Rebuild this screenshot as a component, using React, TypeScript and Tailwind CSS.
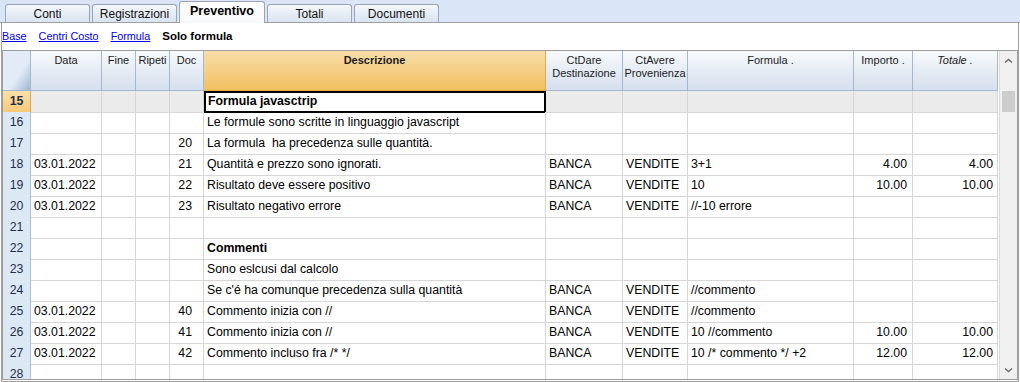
import React from "react";

type Row = {
  n: number;
  data?: string;
  doc?: string;
  desc?: string;
  bold?: boolean;
  dare?: string;
  avere?: string;
  formula?: string;
  importo?: string;
  totale?: string;
};

const rows: Row[] = [
  { n: 15, desc: "Formula javasctrip", bold: true },
  { n: 16, desc: "Le formule sono scritte in linguaggio javascript" },
  { n: 17, doc: "20", desc: "La formula  ha precedenza sulle quantità." },
  { n: 18, data: "03.01.2022", doc: "21", desc: "Quantità e prezzo sono ignorati.", dare: "BANCA", avere: "VENDITE", formula: "3+1", importo: "4.00", totale: "4.00" },
  { n: 19, data: "03.01.2022", doc: "22", desc: "Risultato deve essere positivo", dare: "BANCA", avere: "VENDITE", formula: "10", importo: "10.00", totale: "10.00" },
  { n: 20, data: "03.01.2022", doc: "23", desc: "Risultato negativo errore", dare: "BANCA", avere: "VENDITE", formula: "//-10 errore" },
  { n: 21 },
  { n: 22, desc: "Commenti", bold: true },
  { n: 23, desc: "Sono eslcusi dal calcolo" },
  { n: 24, desc: "Se c'é ha comunque precedenza sulla quantità", dare: "BANCA", avere: "VENDITE", formula: "//commento" },
  { n: 25, data: "03.01.2022", doc: "40", desc: "Commento inizia con //", dare: "BANCA", avere: "VENDITE", formula: "//commento" },
  { n: 26, data: "03.01.2022", doc: "41", desc: "Commento inizia con //", dare: "BANCA", avere: "VENDITE", formula: "10 //commento", importo: "10.00", totale: "10.00" },
  { n: 27, data: "03.01.2022", doc: "42", desc: "Commento incluso fra /* */", dare: "BANCA", avere: "VENDITE", formula: "10 /* commento */ +2", importo: "12.00", totale: "12.00" },
  { n: 28 },
];

const cols =
  "grid grid-cols-[28px_71px_34px_34px_34px_342px_77px_65px_166px_59px_85px]";

const tabs = ["Conti", "Registrazioni", "Preventivo", "Totali", "Documenti"];

const Head = ({
  children,
  italic,
}: {
  children: React.ReactNode;
  italic?: boolean;
}) => (
  <div
    className={`border-r border-b border-[#a3b9d2] bg-linear-to-b from-[#f8fafd] to-[#d5dfed] pt-[3px] text-center text-[11px] leading-[13px] text-[#1b1b1b] ${
      italic ? "italic" : ""
    }`}
  >
    {children}
  </div>
);

const Cell = ({
  children,
  right,
  gray,
  pr,
}: {
  children?: React.ReactNode;
  right?: boolean;
  gray?: boolean;
  pr?: string;
}) => (
  <div
    className={`overflow-hidden whitespace-pre border-r border-b border-[#d6d6d6] pl-[3px] leading-[21px] ${
      right ? "text-right " + (pr ?? "pr-[5px]") : ""
    } ${gray ? "bg-[#ebebeb]" : ""}`}
  >
    {children}
  </div>
);

const Chevron = ({ down }: { down?: boolean }) => (
  <svg width="9" height="6" viewBox="0 0 9 6" className="block">
    <path
      d={down ? "M1 1.5 L4.5 4.5 L8 1.5" : "M1 4.5 L4.5 1.5 L8 4.5"}
      fill="none"
      stroke="#6b6b6b"
      strokeWidth="1.4"
    />
  </svg>
);

export default function App() {
  return (
    <div className="relative h-[382px] w-[1020px] overflow-hidden bg-white font-['Liberation_Sans',Arial,sans-serif] text-black">
      {/* tab bar */}
      <div className="flex h-[23px] items-end gap-[2px] border-b border-[#a0a0a0] bg-[#dae6f7] pl-[5px]">
        {tabs.map((t) =>
          t === "Preventivo" ? (
            <div
              key={t}
              className="relative z-10 -mb-px flex h-[22px] w-[86px] items-center justify-center rounded-t-[3px] border border-b-0 border-[#9ca6b3] bg-linear-to-b from-[#ffffff] to-[#f6f8fb] pb-[2px] text-[12.5px] font-bold"
            >
              {t}
            </div>
          ) : (
            <div
              key={t}
              className="flex h-[18px] w-[85px] items-center justify-center rounded-t-[3px] border border-b-0 border-[#9ca6b3] bg-linear-to-b from-[#f5f8fc] to-[#d9e3f1] text-[12px] text-[#111]"
            >
              {t}
            </div>
          )
        )}
      </div>

      {/* panel */}
      <div className="ml-px h-[359px] w-[1018px] border-x border-b border-[#a0a0a0]">
        <div className="flex h-[27px] items-center gap-[12px] text-[10.8px]">
          <span className="text-[#0000ee] underline">Base</span>
          <span className="text-[#0000ee] underline">Centri Costo</span>
          <span className="text-[#0000ee] underline">Formula</span>
          <span className="text-[11.5px] font-bold">Solo formula</span>
        </div>

        {/* grid */}
        <div className="flex h-[330px] w-[1016px] border border-[#9c9c9c]">
          <div className="w-[996px] overflow-hidden text-[12.3px]">
            <div className={`${cols} h-[40px]`}>
              <div className="border-r border-b border-[#a3b9d2] bg-linear-to-br from-[#e2ebf7] from-60% to-[#a3b8d3]" />
              <Head>Data</Head>
              <Head>Fine</Head>
              <Head>Ripeti</Head>
              <Head>Doc</Head>
              <div className="border-r border-b border-[#e3a94a] bg-linear-to-b from-[#f9dea9] to-[#f2c05e] pt-[3px] text-center text-[11px] font-bold leading-[13px] text-[#1b1b1b]">
                Descrizione
              </div>
              <Head>
                CtDare
                <br />
                Destinazione
              </Head>
              <Head>
                CtAvere
                <br />
                Provenienza
              </Head>
              <Head>Formula .</Head>
              <Head>Importo .</Head>
              <Head italic>Totale .</Head>
            </div>

            {rows.map((r) => {
              const sel = r.n === 15;
              return (
                <div key={r.n} className={`${cols} h-[21px]`}>
                  <div
                    className={`border-r border-b text-center leading-[21px] text-[#1c2f4a] ${
                      sel
                        ? "border-r-[#d8a860] border-b-[#f0983a] bg-linear-to-b from-[#fde1a8] to-[#f7c979] font-bold"
                        : "border-r-[#aec2da] border-b-[#c9d7e9] bg-[#dde8f5]"
                    }`}
                  >
                    {r.n}
                  </div>
                  <Cell gray={sel}>{r.data}</Cell>
                  <Cell gray={sel} />
                  <Cell gray={sel} />
                  <Cell gray={sel} right pr="pr-[11px]">
                    {r.doc}
                  </Cell>
                  {sel ? (
                    <div className="overflow-hidden whitespace-pre border-2 border-black pl-[2px] font-bold leading-[17px]">
                      {r.desc}
                    </div>
                  ) : (
                    <Cell>
                      <span className={r.bold ? "font-bold" : ""}>{r.desc}</span>
                    </Cell>
                  )}
                  <Cell gray={sel}>{r.dare}</Cell>
                  <Cell gray={sel}>{r.avere}</Cell>
                  <Cell gray={sel}>{r.formula}</Cell>
                  <Cell gray={sel} right>
                    {r.importo}
                  </Cell>
                  <Cell gray={sel} right pr="pr-[4px]">
                    {r.totale}
                  </Cell>
                </div>
              );
            })}
          </div>

          {/* scrollbar */}
          <div className="flex w-[18px] flex-col border-l border-[#dadada] bg-[#f0f0f0]">
            <div className="flex h-[18px] items-center justify-center pt-[2px]">
              <Chevron />
            </div>
            <div className="flex-1 px-[2px] pt-[22px]">
              <div className="h-[21px] bg-[#cdcdcd]" />
            </div>
            <div className="flex h-[18px] items-center justify-center">
              <Chevron down />
            </div>
          </div>
        </div>
      </div>
    </div>
  );
}
